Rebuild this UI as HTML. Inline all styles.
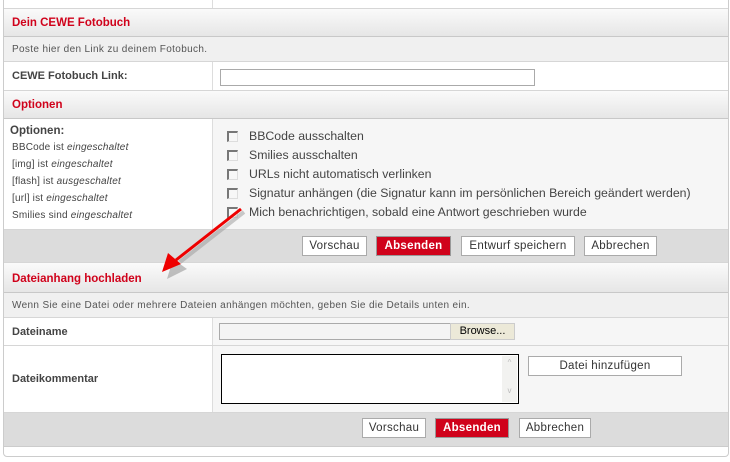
<!DOCTYPE html>
<html><head><meta charset="utf-8"><style>
*{margin:0;padding:0;box-sizing:border-box}
body{width:730px;height:462px;background:#fff;font-family:"Liberation Sans",Verdana,sans-serif;position:relative;overflow:hidden;color:#333}
.wrap{position:absolute;left:3px;top:-4px;width:726px;height:461px;border:1px solid #ccc;border-radius:0 0 4px 4px;background:#fff}
.r{position:absolute;left:0;width:724px;border-bottom:1px solid #d6d6d6}
.hd{background:linear-gradient(#fafafa,#e6e6e6);color:#d0021b;font-size:11.5px;font-weight:bold;padding-left:8px;border-bottom:1px solid #c8c8c8}
.ds{background:#f0f0f0;font-size:10px;letter-spacing:.35px;color:#555;padding-left:8px}
.lab{position:absolute;left:0;width:208px;font-size:11px;font-weight:bold;color:#444;padding-left:8px}
.rc{position:absolute;left:208px;right:0;top:0;bottom:0;background:#f6f6f6;border-left:1px solid #ddd}
.bar{background:#dcdcdc}
.btn{position:absolute;height:20px;border:1px solid #aaa;background:#fff;font-size:11.5px;color:#333;text-align:center;line-height:18px;letter-spacing:.3px}
.btn.red{background:#d0021b;color:#fff;font-weight:bold;border-color:#999}
.cb{position:absolute;left:227px;width:11px;height:11px;border-top:2px solid #777;border-left:2px solid #777;border-right:1px solid #ddd;border-bottom:1px solid #ddd;background:#f7f7f7}
.ot{position:absolute;left:249px;font-size:12.3px;color:#444}
.sm{position:absolute;left:12px;font-size:10px;letter-spacing:.2px;color:#444}
</style></head><body>
<div class="wrap">
<div class="r" style="top:0;height:12px"><div class="rc" style="background:#fff"></div></div>
<div class="r hd" style="top:12px;height:28px;line-height:28px">Dein CEWE Fotobuch</div>
<div class="r ds" style="top:40px;height:25px;line-height:25px">Poste hier den Link zu deinem Fotobuch.</div>
<div class="r" style="top:65px;height:29px"><div class="lab" style="line-height:29px">CEWE Fotobuch Link:</div><div class="rc" style="background:#fff"><div style="position:absolute;left:7px;top:7px;width:315px;height:17px;border:1px solid #aaa;background:#fff"></div></div></div>
<div class="r hd" style="top:94px;height:28px;line-height:28px">Optionen</div>
<div class="r" style="top:122px;height:111px"><div class="rc"></div></div>
<div class="r bar" style="top:233px;height:33px"></div>
<div class="r hd" style="top:266px;height:30px;line-height:28px;padding-top:2px">Dateianhang hochladen</div>
<div class="r ds" style="top:296px;height:25px;line-height:25px">Wenn Sie eine Datei oder mehrere Dateien anhängen möchten, geben Sie die Details unten ein.</div>
<div class="r" style="top:321px;height:28px;background:#fff"><div class="lab" style="line-height:28px">Dateiname</div><div class="rc"></div></div>
<div class="r" style="top:349px;height:67px;background:#fff"><div class="lab" style="line-height:67px">Dateikommentar</div><div class="rc"></div></div>
<div class="r bar" style="top:416px;height:34px;border-bottom:1px solid #ccc"></div>
</div>
<div style="position:absolute;left:10px;top:125px;font-size:11.5px;font-weight:bold;color:#444">Optionen:</div>
<div class="sm" style="top:142px">BBCode ist <i>eingeschaltet</i></div>
<div class="sm" style="top:159px">[img] ist <i>eingeschaltet</i></div>
<div class="sm" style="top:176px">[flash] ist <i>ausgeschaltet</i></div>
<div class="sm" style="top:193px">[url] ist <i>eingeschaltet</i></div>
<div class="sm" style="top:210px">Smilies sind <i>eingeschaltet</i></div>
<div class="cb" style="top:131px"></div><div class="ot" style="top:129px">BBCode ausschalten</div>
<div class="cb" style="top:150px"></div><div class="ot" style="top:148px">Smilies ausschalten</div>
<div class="cb" style="top:169px"></div><div class="ot" style="top:167px">URLs nicht automatisch verlinken</div>
<div class="cb" style="top:188px"></div><div class="ot" style="top:186px">Signatur anhängen (die Signatur kann im persönlichen Bereich geändert werden)</div>
<div class="cb" style="top:207px"></div><div class="ot" style="top:205px">Mich benachrichtigen, sobald eine Antwort geschrieben wurde</div>
<div class="btn" style="left:302px;top:236px;width:65px">Vorschau</div>
<div class="btn red" style="left:376px;top:236px;width:75px">Absenden</div>
<div class="btn" style="left:461px;top:236px;width:114px">Entwurf speichern</div>
<div class="btn" style="left:584px;top:236px;width:73px">Abbrechen</div>
<div style="position:absolute;left:219px;top:323px;width:232px;height:17px;border:1px solid #aaa;background:#f4f4f4"></div>
<div style="position:absolute;left:450px;top:323px;width:65px;height:17px;border:1px solid #ccc;background:#ece9d8;font-size:11px;line-height:15px;text-align:center;color:#000">Browse...</div>
<div style="position:absolute;left:221px;top:354px;width:298px;height:50px;border:1px solid #000;background:#fff"><div style="position:absolute;right:1px;top:1px;width:15px;height:46px;background:#f2f2f0;color:#bbb;font-size:8px;text-align:center;line-height:14px">^<br><br>v</div></div>
<div class="btn" style="left:528px;top:356px;width:154px">Datei hinzufügen</div>
<div class="btn" style="left:362px;top:418px;width:64px">Vorschau</div>
<div class="btn red" style="left:435px;top:418px;width:74px">Absenden</div>
<div class="btn" style="left:519px;top:418px;width:72px">Abbrechen</div>
<svg style="position:absolute;left:0;top:0" width="730" height="462">
<line x1="244" y1="212" x2="180" y2="262" stroke="#999" stroke-width="4" opacity=".5"/>
<polygon points="164,276 170,256 184,266" fill="#888" opacity=".5" transform="translate(3,3)"/>
<line x1="241" y1="209" x2="176" y2="260" stroke="#e00" stroke-width="3"/>
<polygon points="162,272 168,253 181,264" fill="#e00"/>
</svg>
</body></html>
